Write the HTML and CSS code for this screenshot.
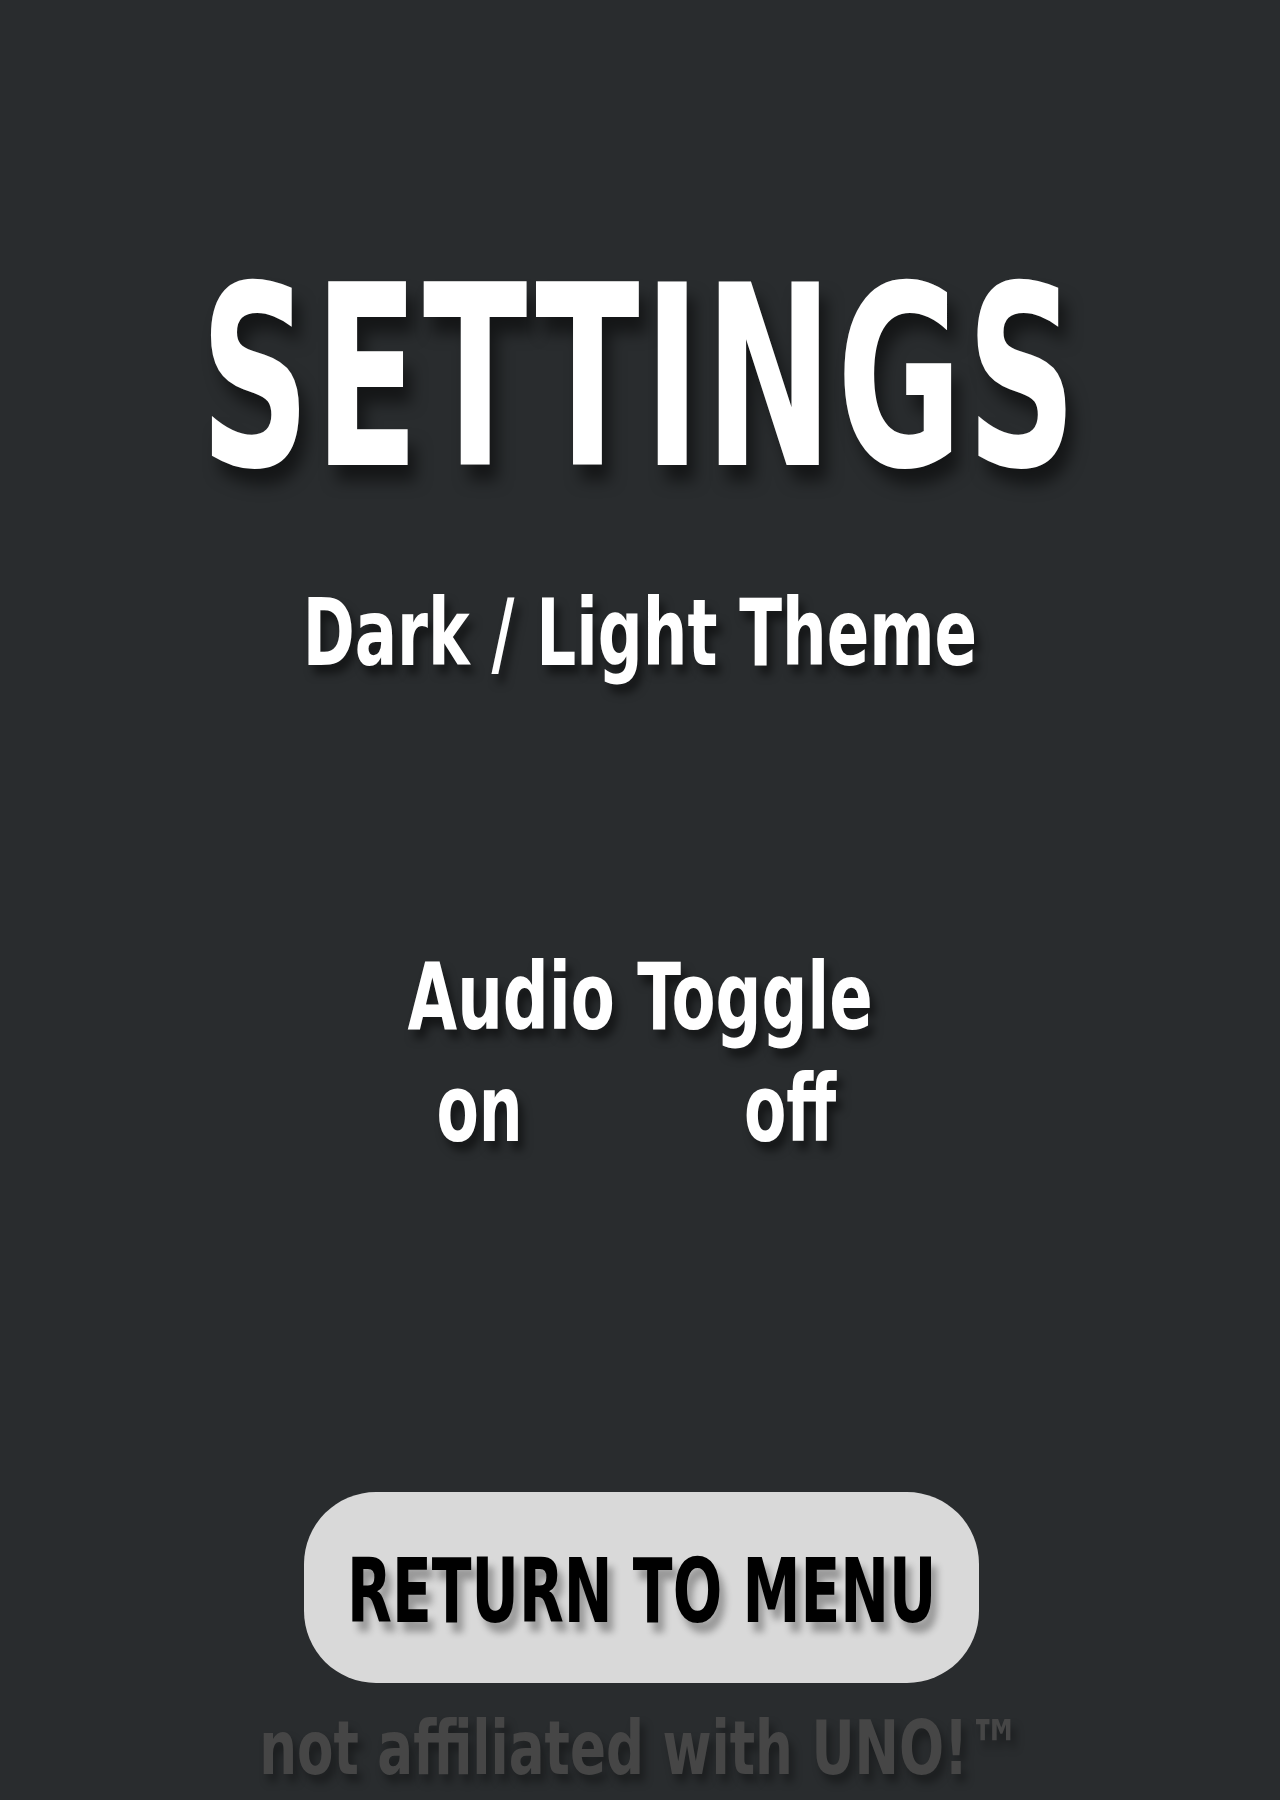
FILE: index.html
```html
<!DOCTYPE html>
<html lang="en">
<head>
<meta charset="utf-8">
<title>Settings</title>
<link rel="stylesheet" href="styles.css">
</head>
<body>
<main class="page">
  <h1 class="title"><span class="squeeze sq-title">SETTINGS</span></h1>
  <div class="option theme"><span class="squeeze sq-theme">Dark / Light Theme</span></div>
  <div class="option audio"><span class="squeeze sq-audio">Audio Toggle</span></div>
  <div class="toggle-row">
    <span class="toggle-word">on</span>
    <span class="toggle-word">off</span>
  </div>
  <button class="menu-btn"><span class="squeeze sq-btn">RETURN TO MENU</span></button>
  <p class="footer"><span class="squeeze sq-foot">not affiliated with UNO!™</span></p>
</main>
</body>
</html>
```
FILE: styles.css
```css
html, body {
  margin: 0;
  padding: 0;
  background: #292c2e;
}
body {
  font-family: "DejaVu Sans Condensed", "DejaVu Sans", sans-serif;
  font-weight: bold;
  color: #ffffff;
}
.page {
  display: flex;
  flex-direction: column;
  align-items: center;
  padding-top: 252px;
  width: 1280px;
  height: 1800px;
  box-sizing: border-box;
  overflow: hidden;
}
.squeeze {
  display: inline-block;
  transform-origin: center;
  white-space: nowrap;
  flex-shrink: 0;
}
.title {
  margin: 0;
  font-size: 252px;
  line-height: 252px;
  height: 252px;
  font-weight: bold;
  text-shadow: 12px 16px 18px rgba(0, 0, 0, 0.5);
}
.sq-title { transform: scaleX(0.675); letter-spacing: 6px; }
.option {
  font-size: 92px;
  line-height: 92px;
  height: 92px;
  text-shadow: 7px 9px 10px rgba(0, 0, 0, 0.5);
}
.theme { margin-top: 84px; }
.sq-theme { transform: scaleX(0.758); }
.audio { margin-top: 272px; }
.sq-audio { transform: scaleX(0.775); }
.toggle-row {
  margin-top: 20px;
  display: flex;
  gap: 297px;
  font-size: 92px;
  line-height: 92px;
  height: 92px;
  transform: scaleX(0.745);
  margin-left: -8px;
  text-shadow: 7px 9px 10px rgba(0, 0, 0, 0.5);
}
.menu-btn {
  margin-top: 336px;
  width: 675px;
  height: 191px;
  flex-shrink: 0;
  border: none;
  border-radius: 72px;
  background: #d9d9d9;
  color: #000000;
  font-family: inherit;
  font-weight: bold;
  font-size: 89px;
  line-height: 89px;
  padding: 0;
  margin-left: 3px;
  display: flex;
  align-items: center;
  justify-content: center;
  overflow: visible;
  text-shadow: 8px 10px 9px rgba(0, 0, 0, 0.3);
}
.sq-btn { transform: scaleX(0.728); margin-top: 8px; }
.footer {
  margin: 28px 0 0 0;
  font-size: 75px;
  line-height: 75px;
  color: #464646;
  text-shadow: 6px 8px 9px rgba(0, 0, 0, 0.35);
}
.sq-foot { transform: scaleX(0.787); }
```
